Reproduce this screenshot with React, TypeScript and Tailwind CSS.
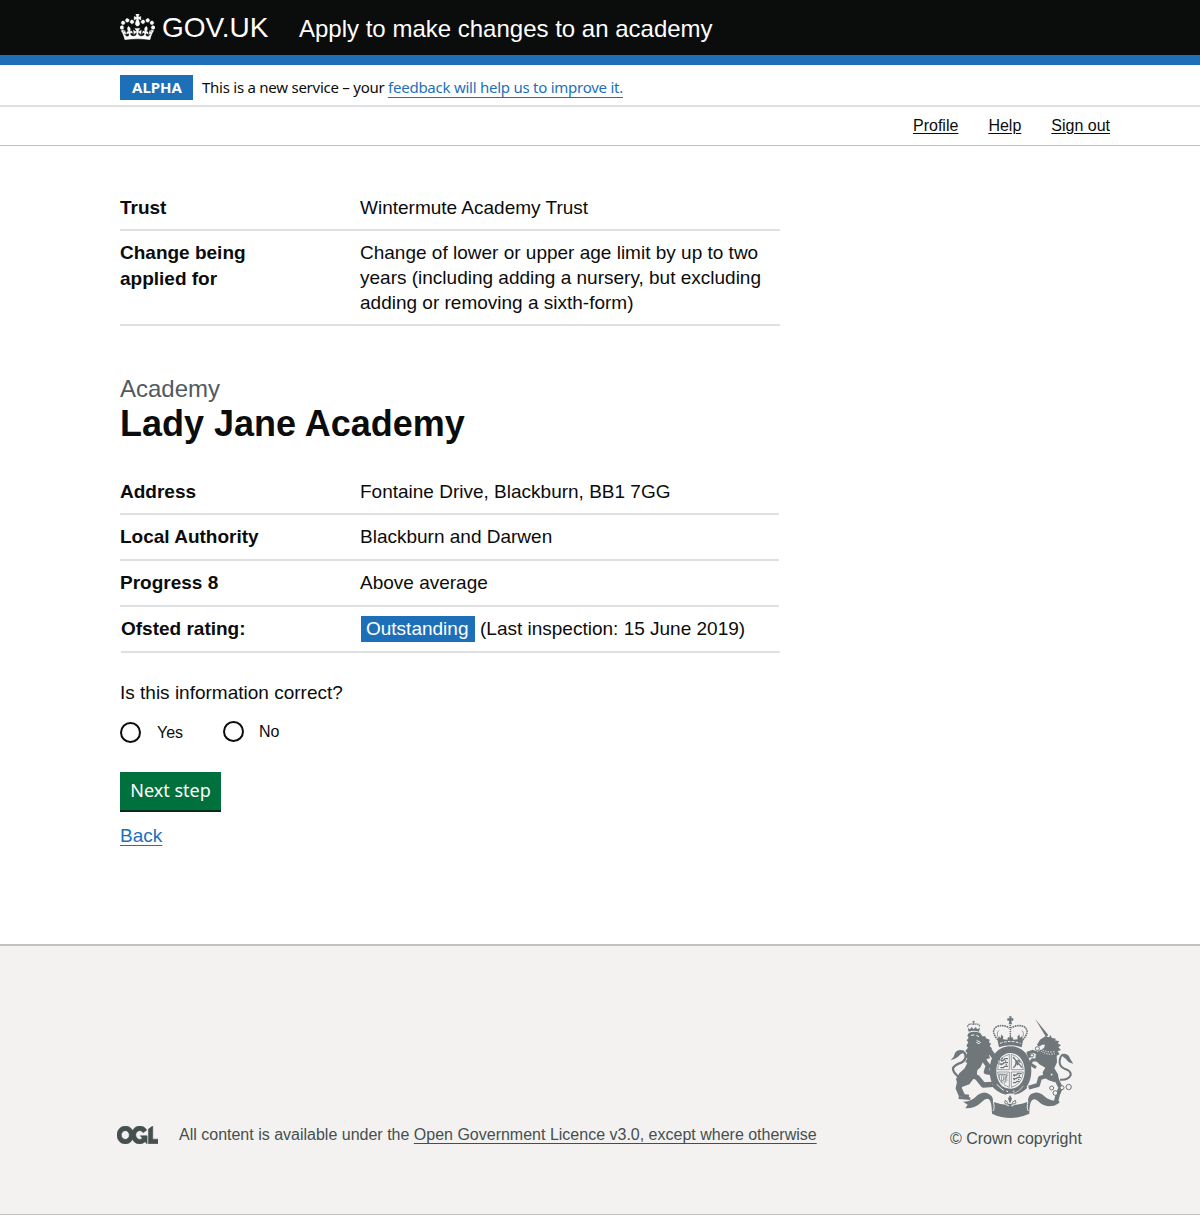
import React from 'react';

const CREST = '#6f777b';
const PAPER = '#f3f2f1';

function Crown() {
  return (
    <svg className="block h-[26px] w-[35px]" viewBox="0 0 132 97" preserveAspectRatio="none" fill="#fff" stroke="#fff" strokeWidth="1.500" aria-hidden="true">
      <path fillRule="evenodd" d="M25 30.2c3.5 1.5 7.7-.2 9.1-3.7 1.5-3.6-.2-7.8-3.9-9.2-3.6-1.4-7.6.3-9.1 3.9-1.4 3.5.3 7.5 3.9 9zM9 39.5c3.6 1.5 7.8-.2 9.2-3.7 1.5-3.6-.2-7.8-3.9-9.1-3.6-1.5-7.6.2-9.1 3.8-1.4 3.5.3 7.5 3.8 9zM4.4 57.2c3.5 1.5 7.7-.2 9.1-3.8 1.5-3.6-.2-7.7-3.9-9.1-3.5-1.5-7.6.3-9.1 3.8-1.4 3.5.3 7.6 3.9 9.1zm38.3-21.4c3.5 1.5 7.7-.2 9.1-3.8 1.5-3.6-.2-7.7-3.9-9.1-3.6-1.5-7.6.3-9.1 3.8-1.3 3.6.4 7.7 3.9 9.1zm64.4-5.6c-3.6 1.5-7.8-.2-9.1-3.7-1.5-3.6.2-7.8 3.8-9.2 3.6-1.4 7.7.3 9.2 3.9 1.3 3.5-.4 7.5-3.9 9zm15.9 9.3c-3.6 1.5-7.7-.2-9.1-3.7-1.5-3.6.2-7.8 3.7-9.1 3.6-1.5 7.7.2 9.2 3.8 1.5 3.5-.3 7.5-3.8 9zm4.7 17.7c-3.6 1.5-7.8-.2-9.2-3.8-1.5-3.6.2-7.7 3.9-9.1 3.6-1.5 7.7.3 9.2 3.8 1.3 3.5-.4 7.6-3.9 9.1zM89.3 35.8c-3.6 1.5-7.8-.2-9.2-3.8-1.4-3.6.2-7.7 3.9-9.1 3.6-1.5 7.7.3 9.2 3.8 1.4 3.6-.3 7.7-3.9 9.1zM69.7 17.7l8.9 4.7V9.3l-8.9 2.8c-.2-.3-.5-.6-.9-.9L72.4 0H59.6l3.5 11.2c-.3.3-.6.5-.9.9l-8.8-2.8v13.1l8.8-4.7c.3.3.6.7.9.9l-5 15.4v.1c-.2.8-.4 1.6-.4 2.4 0 4.1 3.1 7.5 7 8.1h.2c.3 0 .7.1 1 .1.4 0 .7 0 1-.1h.2c4-.6 7.1-4.1 7.1-8.1 0-.8-.1-1.7-.4-2.4V34l-5.1-15.4c.4-.2.7-.6 1-.9zM66 92.8c16.9 0 32.8 1.1 47.1 3.2 4-16.9 8.9-26.7 14-33.5l-9.6-3.4c1 4.9 1.1 7.2 0 10.2-1.5-1.4-3-4.3-4.2-8.7L108.6 76c2.8-2 5-3.2 7.5-3.3-4.4 9.4-10 11.9-13.6 11.2-4.3-.8-6.3-4.6-5.6-7.9 1-4.7 5.7-5.9 8-.5 4.3-8.7-3-11.4-7.6-8.8 7.1-7.2 7.9-13.5 2.1-21.1-8 6.1-8.1 12.3-4.5 20.8-4.7-5.4-12.1-2.5-9.5 6.2 3.4-5.2 7.9-2 7.2 3.1-.6 4.3-6.4 7.8-13.5 7.2-10.3-.9-10.900-8-11.200-13.800 2.500-.5 7.100 1.800 11 7.300L80.200 60c-4.100 4.400-8 5.300-12.300 5.400 1.400-4.400 8-11.600 8-11.600H55.500s6.400 7.200 7.900 11.600c-4.200-.1-8-1-12.300-5.400l1.400 16.400c3.900-5.500 8.500-7.700 10.900-7.300-.3 5.800-.9 12.800-11.100 13.800-7.200.6-12.900-2.900-13.500-7.200-.7-5 3.800-8.300 7.100-3.100 2.700-8.700-4.600-11.600-9.400-6.200 3.700-8.500 3.600-14.700-4.600-20.800-5.800 7.600-5 13.900 2.200 21.100-4.700-2.600-11.900.1-7.700 8.800 2.300-5.500 7.100-4.200 8.100.5.7 3.300-1.300 7.100-5.700 7.900-3.500.7-9-1.800-13.500-11.200 2.500.1 4.700 1.300 7.500 3.300l-4.700-15.400c-1.200 4.400-2.700 7.200-4.300 8.700-1.100-3-.9-5.300 0-10.200l-9.500 3.400c5 6.900 9.900 16.700 14 33.500 14.800-2.100 30.800-3.200 47.700-3.200z" />
    </svg>
  );
}

function OglLogo() {
  return (
    <svg className="block h-[18px] w-[41px] shrink-0" viewBox="0 0 483.2 195.7" preserveAspectRatio="none" fill="#454f4f" stroke="#454f4f" strokeWidth="6" aria-label="Open Government Licence">
      <path d="M421.5 142.8V.1l-50.7 32.3v161.1h112.4v-50.7zm-122.3-9.6A47.12 47.12 0 0 1 221 97.8c0-26 21.1-47.1 47.1-47.1 16.7 0 31.4 8.7 39.7 21.8l42.7-27.2A97.63 97.63 0 0 0 268.1 0c-36.5 0-68.3 20.1-85.1 49.7A98 98 0 0 0 97.8 0C43.9 0 0 43.9 0 97.8s43.9 97.8 97.8 97.8c36.5 0 68.3-20.1 85.1-49.7a97.76 97.76 0 0 0 149.6 25.4l19.4 22.2h3v-87.8h-80l24.3 27.5zM97.8 145c-26 0-47.1-21.1-47.1-47.1s21.1-47.1 47.1-47.1 47.1 21.1 47.1 47.1S123.8 145 97.8 145" />
    </svg>
  );
}

function Lion() {
  return (
    <g>
      {/* crown */}
      <path d="M86 80L83 68L90 73L95 66L101 73L107 66L112 73L120 68L117 80Q101 75 86 80Z" fill={CREST} />
      <path d="M101 47v10M97 51h8M83 66q0-12 18-8q18-4 18 8" fill="none" stroke={CREST} strokeWidth="3.500" strokeDasharray="5 1.500" />
      {/* mane, torso and haunch */}
      <path d="M86 84Q103 77 121 84L127 94L136 94L138 100L149 104L147 112L153 116L149 124L156 130L150 137L156 145L147 150L150 160L140 162L137 172L128 172L122 186L112 196L110 212L100 222L88 238L66 246L53 240L48 222L58 205L74 190L82 174L76 172L82 160L75 156L82 144L76 138L84 128L79 122L85 112L80 106L86 98L82 92Z" fill={CREST} />
      <g fill="none" stroke={CREST} strokeLinejoin="round">
        <path d="M142 128L158 150L170 166" strokeWidth="15" />
        <path d="M163 160l17 4M162 166l13 9" strokeWidth="5" />
        <path d="M126 158L144 182L138 201L155 204" strokeWidth="14" />
        <path d="M92 208L112 218L130 240L158 238" strokeWidth="16" />
        <path d="M60 232L56 250L66 272" strokeWidth="18" />
        <path d="M56 278L91 281M62 270L87 273" strokeWidth="8" />
        <path d="M60 218Q37 203 39 189Q44 180 64 173Q80 164 76 148Q72 139 62 141" strokeWidth="7" />
      </g>
      <path d="M73 137Q53 130 45 144Q43 156 32 166Q51 160 60 149Q68 145 73 137Z" fill={CREST} />
      <path d="M93 91l10-1M109 91l8 4M110 106l11 6-4 4-8-4" fill="none" stroke={PAPER} strokeWidth="3" />
    </g>
  );
}

function Unicorn() {
  return (
    <g>
      <path d="M285 41L325 90L318 96Z" fill={CREST} />
      {/* head, neck and body */}
      <path d="M316 94L328 97L331 90L336 99L348 101L345 106L358 109L353 115L363 121L355 127L363 135L353 139L359 148L350 152L351 172L343 190L354 208L356 222L344 232L326 226L310 216L308 202L316 188L298 178L286 166L287 150L297 137L312 129L315 119L306 119L297 125L291 119L300 104Z" fill={CREST} />
      <g fill="none" stroke={CREST} strokeLinejoin="round">
        <path d="M296 145L278 139L264 144L270 158" strokeWidth="9" />
        <path d="M298 166L277 164L270 176L288 188" strokeWidth="9" />
        <path d="M328 210L300 219L294 240L266 248" strokeWidth="12" />
        <path d="M346 216L362 248L353 270L348 290" strokeWidth="13" />
        <path d="M360 224Q384 226 392 211Q394 196 373 191Q357 184 359 167Q361 151 370 148" strokeWidth="6" />
      </g>
      <path d="M364 150Q374 141 386 152Q391 163 400 176Q385 174 378 162Q371 158 364 150Z" fill={CREST} />
      {/* coronet collar and chain */}
      <path d="M301 131Q322 145 347 139M304 139Q322 151 345 146" fill="none" stroke={PAPER} strokeWidth="3" strokeDasharray="4 4" />
      <g fill={PAPER} stroke={CREST} strokeWidth="3">
        <circle cx="292" cy="131" r="6" /><circle cx="276" cy="151" r="5" /><circle cx="335" cy="209" r="4" />
        <circle cx="335" cy="249" r="6" /><circle cx="346" cy="264" r="7" /><circle cx="366" cy="248" r="6" /><circle cx="386" cy="246" r="8" />
      </g>
    </g>
  );
}

function RoyalArms() {
  return (
    <svg className="block h-[115px] w-[145px]" viewBox="0 0 435 345" fill={CREST} aria-hidden="true">
      <Lion />
      <Unicorn />

      {/* imperial crown */}
      <path d="M207 34h8l-1 6h6v7h-6l2 11h-10l2-11h-6v-7h7z" />
      <g fill="none" stroke={CREST}>
        <path d="M174 105Q150 78 170 65Q190 57 208 69M248 105Q272 78 252 65Q232 57 214 69" strokeWidth="5" strokeDasharray="5 2" />
        <path d="M211 60V92" strokeWidth="4.500" strokeDasharray="4 2" />
        <path d="M178 104Q166 84 177 76M244 104Q256 84 245 76" strokeWidth="2" />
      </g>
      <path d="M173 107L177 94L182 99L184 88L190 95L189 103L202 104L204 96L208 98L211 86L214 98L218 96L220 104L233 103L232 95L238 88L240 99L245 94L249 107L245 127Q211 114 177 127Z" />
      <path d="M180 115Q211 104 242 115" fill="none" stroke={PAPER} strokeWidth="3" strokeDasharray="8 4" />

      {/* garter and quartered shield */}
      <path fillRule="evenodd" d="M211 124C248 124 274 153 274 197C274 241 248 268 211 268C174 268 149 241 149 197C149 153 174 124 211 124ZM211 144C186 144 169 168 169 198C169 230 186 251 211 251C236 251 254 230 254 198C254 168 236 144 211 144Z" />
      <path d="M173 194Q173 157 208 148V194ZM214 148Q247 157 250 194H214ZM173 201H208V247Q176 237 173 201ZM214 201H250Q247 237 214 247Z" fill="none" stroke={CREST} strokeWidth="2" />
      <g fill="none" stroke={CREST} strokeWidth="4">
        <path d="M183 166h8l3-5h10M184 163l4-5M178 177h10l4-4h12M181 188h9l4-4h10M186 166v4M197 166v4M184 177v4M199 177v4" />
        <path d="M219 156l27 32M225 184l5-15 9-3M226 169l8 11M220 188l8-8M233 164l8 9" />
        <path d="M219 210h10l4-4h12M219 221h10l4-4h10M219 233h8l4-4h8M223 211v4M238 210v4M223 222v4M236 221v4" />
      </g>
      <path d="M178 206v20M183 205l3 29M188 205l6 34M194 206l4 28M199 208l2 20M178 208q14 3 26-2M182 230q12-6 22-20" fill="none" stroke={CREST} strokeWidth="2" />
      <path d="M154 242L169 231Q186 254 211 255Q233 255 251 237L262 248Q240 270 211 270Q179 270 154 242Z" />
      <path d="M170 238l18 16M186 253l5 3M199 258l5 2M218 259l5-1" fill="none" stroke={PAPER} strokeWidth="3" />
      <path d="M184 243q12-10 22-10M218 266q20-5 32-24" fill="none" stroke={PAPER} strokeWidth="2" />

      {/* motto ribbon and badge */}
      <path d="M69 290Q94 291 113 270Q132 256 148 268Q160 275 159 290Q211 311 264 290Q263 269 281 264Q297 259 313 274Q331 290 354 287Q363 290 354 296L342 302L324 304Q306 301 294 288Q283 278 276 286Q268 293 268 326Q212 352 156 326Q155 289 147 283Q139 277 126 290Q105 311 76 310L83 299Z" />
      <path d="M160 289Q165 311 159 318M264 289Q259 310 265 318" fill="none" stroke={PAPER} strokeWidth="3" />
      <path d="M199 268Q211 263 223 268L229 294Q211 317 193 294Z" fill={PAPER} />
      <path d="M210 270l6 11-6 15-6-15zM203 297h14v4h-14zM208 300h5l4 11-7-4-7 4z" />
      <path d="M205 296Q190 300 196 286L204 293M215 296Q232 300 226 286L216 293" fill="none" stroke={CREST} strokeWidth="3" />
    </svg>
  );
}

function Row({ label, children, className = '' }: { label: React.ReactNode; children: React.ReactNode; className?: string }) {
  return (
    <div className={`flex border-b-2 border-[#dee0e2] text-[19px] leading-[25px] ${className}`}>
      <dt className="w-[240px] shrink-0 font-bold">{label}</dt>
      <dd>{children}</dd>
    </div>
  );
}

export default function App() {
  return (
    <div className="flex h-[1215px] w-[1200px] flex-col overflow-hidden bg-white font-['Liberation_Sans',Arial,sans-serif] text-[#0b0c0c]">
      <header className="h-[65px] shrink-0 border-b-10 border-[#1d70b8] bg-[#0b0c0c] pl-[120px] text-white">
        <div className="flex h-[55px] whitespace-nowrap">
          <div className="pt-[13.5px]"><Crown /></div>
          <span className="ml-[7px] w-[137px] pt-[11px] text-[28px] leading-[34px]">GOV.UK</span>
          <span className="pt-[14px] text-[24px] leading-[30px]">Apply to make changes to an academy</span>
        </div>
      </header>

      <div className="flex h-[42px] shrink-0 items-start border-b-2 border-[#dee0e2] pt-[10px] pl-[120px] font-['Noto_Sans',sans-serif] text-[15px] leading-[24px]">
        <strong className="h-[25px] w-[73px] bg-[#1d70b8] pl-px text-center text-[15px] leading-[24px] text-white">ALPHA</strong>
        <span className="ml-[9px] tracking-[-0.25px] whitespace-nowrap">
          This is a new service – your <a className="text-[#1d70b8] underline decoration-1 underline-offset-[4px]">feedback will help us to improve it.</a>
        </span>
      </div>

      <nav className="flex h-[39px] shrink-0 justify-end gap-[30px] border-b border-[#bfc1c3] pt-[8px] pr-[90px] text-[16px] leading-[22px]">
        <a className="underline underline-offset-[2px]">Profile</a>
        <a className="underline underline-offset-[2px]">Help</a>
        <a className="underline underline-offset-[2px]">Sign out</a>
      </nav>

      <main className="h-[798px] shrink-0 pt-[49px] pl-[120px]">
        <dl className="w-[660px]">
          <Row label="Trust" className="h-[36px]">Wintermute Academy Trust</Row>
          <Row label={<span className="block leading-[26px]">Change being<br />applied for</span>} className="h-[95px] pt-[9px]">
            Change of lower or upper age limit by up to two<br />
            years (including adding a nursery, but excluding<br />
            adding or removing a sixth-form)
          </Row>
        </dl>

        <p className="mt-[48px] text-[24px] leading-[30px] text-[#505a5f]">Academy</p>
        <h1 className="text-[36px] leading-[40px] font-bold">Lady Jane Academy</h1>

        <dl className="mt-[35px] w-[659px]">
          <Row label="Address" className="h-[36px]">Fontaine Drive, Blackburn, BB1 7GG</Row>
          <Row label="Local Authority" className="h-[46px] pt-[9px]">Blackburn and Darwen</Row>
          <Row label="Progress 8" className="h-[46px] pt-[9px]">Above average</Row>
          <Row label="Ofsted rating:" className="ml-px h-[46px] w-[659px] pt-[9px]">
            <span className="inline-block h-[26px] w-[114px] bg-[#1d70b8] pl-[5px] text-white">Outstanding</span>
            <span className="ml-[5px]">(Last inspection: 15 June 2019)</span>
          </Row>
        </dl>

        <p className="mt-[27px] text-[19px] leading-[25px]">Is this information correct?</p>
        <div className="mt-[16px] flex h-[22px] text-[16px] leading-[22px]">
          <span className="mt-px size-[21px] rounded-full border-2 border-[#0b0c0c]" />
          <span className="mt-px ml-[16px] w-[66px]">Yes</span>
          <span className="size-[21px] rounded-full border-2 border-[#0b0c0c]" />
          <span className="ml-[15px]">No</span>
        </div>

        <button className="mt-[29px] block h-[40px] w-[101px] border-b-2 border-[#002d18] bg-[#00703c] pb-[2px] font-['Noto_Sans',sans-serif] text-[18px] leading-[36px] text-white">Next step</button>
        <a className="mt-[11px] block w-fit text-[19px] leading-[25px] text-[#1d70b8] underline decoration-1 underline-offset-[3px]">Back</a>
      </main>

      <footer className="flex h-[271px] shrink-0 border-t-2 border-b border-[#bfc1c3] bg-[#f3f2f1] pl-[117px] text-[16px] leading-[20px] text-[#454f4f]">
        <div className="flex w-[823px] items-start pt-[180px] whitespace-nowrap">
          <OglLogo />
          <p className="mt-[-1px] ml-[21px]">All content is available under the <a className="underline underline-offset-[3px]">Open Government Licence v3.0, except where otherwise</a></p>
        </div>
        <div className="pt-[59px]">
          <RoyalArms />
          <p className="mt-[9px] pl-[10px]">© Crown copyright</p>
        </div>
      </footer>
    </div>
  );
}
